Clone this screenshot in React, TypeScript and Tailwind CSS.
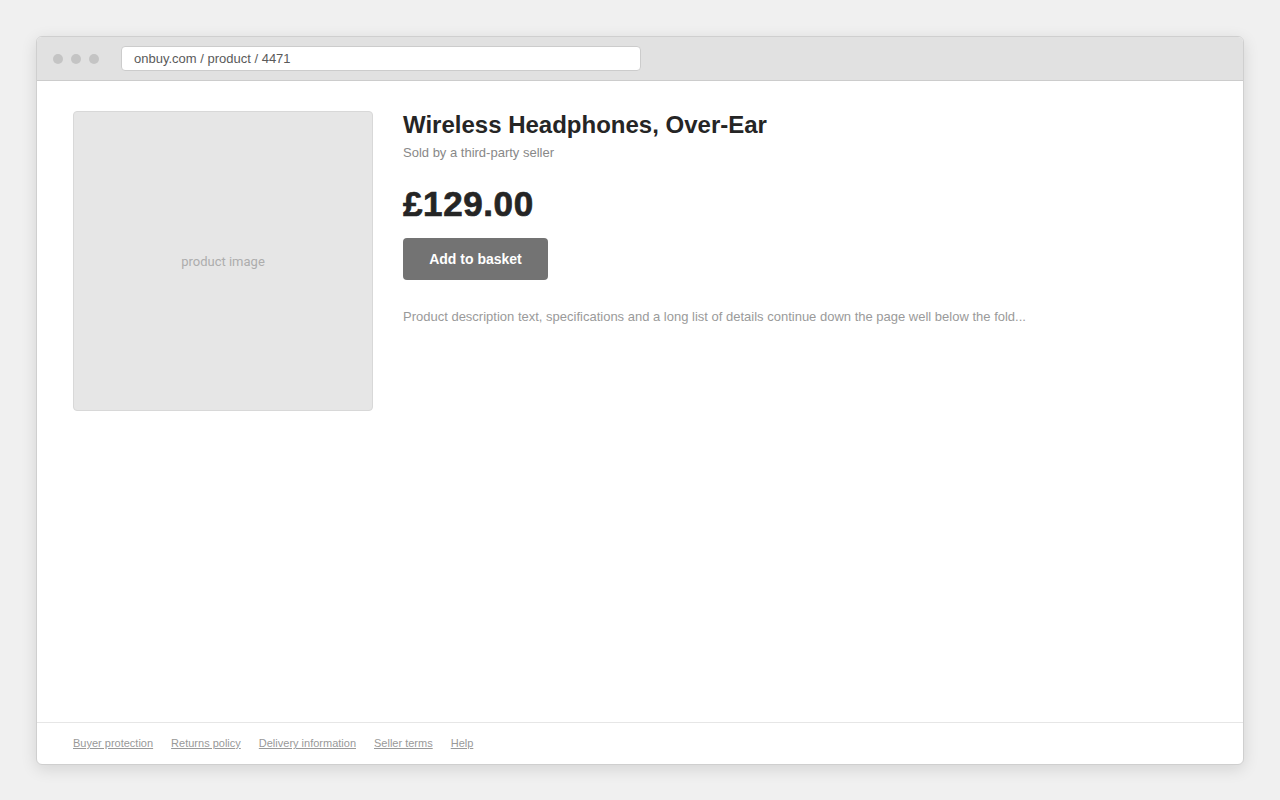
export default function App() {
  const links = ["Buyer protection", "Returns policy", "Delivery information", "Seller terms", "Help"]

  return (
    <div className="min-h-screen w-full bg-[#f0f0f0] pt-[36px] px-[36px] font-['Liberation_Sans',Arial,sans-serif]">
      <div className="h-[729px] flex flex-col bg-white border border-[#cfcfcf] rounded-[6px] overflow-hidden shadow-[0_4px_16px_rgba(0,0,0,0.12)]">
        {/* title bar */}
        <div className="h-[44px] shrink-0 flex items-center bg-[#e1e1e1] border-b border-[#cccccc] pl-[16px]">
          <div className="flex gap-[8px]">
            <span className="w-[10px] h-[10px] rounded-full bg-[#c4c4c4]" />
            <span className="w-[10px] h-[10px] rounded-full bg-[#c4c4c4]" />
            <span className="w-[10px] h-[10px] rounded-full bg-[#c4c4c4]" />
          </div>
          <div className="ml-[22px] w-[520px] h-[25px] flex items-center bg-white border border-[#cccccc] rounded-[4px] px-[12px] text-[13px] text-[#5a5a5a]">
            onbuy.com / product / 4471
          </div>
        </div>

        {/* page */}
        <div className="flex-1 flex gap-[30px] px-[36px] pt-[30px]">
          <div className="w-[300px] h-[300px] shrink-0 flex items-center justify-center bg-[#e6e6e6] border border-[#d8d8d8] rounded-[4px] text-[13px] text-[#adadad] font-['Roboto',sans-serif]">
            <span className="translate-y-[1px]">product image</span>
          </div>
          <div className="flex flex-col">
            <h1 className="text-[24px] leading-[28px] font-bold text-[#252525]">Wireless Headphones, Over-Ear</h1>
            <p className="mt-[5px] text-[13px] leading-[18px] text-[#888]">Sold by a third-party seller</p>
            <div className="mt-[22px] text-[35px] leading-[40px] font-black tracking-[0.6px] text-[#252525] [-webkit-text-stroke:0.7px_#252525]">£129.00</div>
            <button className="mt-[14px] w-[145px] h-[42px] rounded-[4px] bg-[#737373] text-white text-[14px] font-bold">
              Add to basket
            </button>
            <p className="mt-[28px] text-[13px] leading-[18px] text-[#9a9a9a]">
              Product description text, specifications and a long list of details continue down the page well below the fold...
            </p>
          </div>
        </div>

        {/* footer */}
        <div className="h-[42px] shrink-0 flex items-center gap-[18px] px-[36px] border-t border-[#e6e6e6]">
          {links.map((l) => (
            <a key={l} className="text-[11px] text-[#999] underline">
              {l}
            </a>
          ))}
        </div>
      </div>
    </div>
  )
}
